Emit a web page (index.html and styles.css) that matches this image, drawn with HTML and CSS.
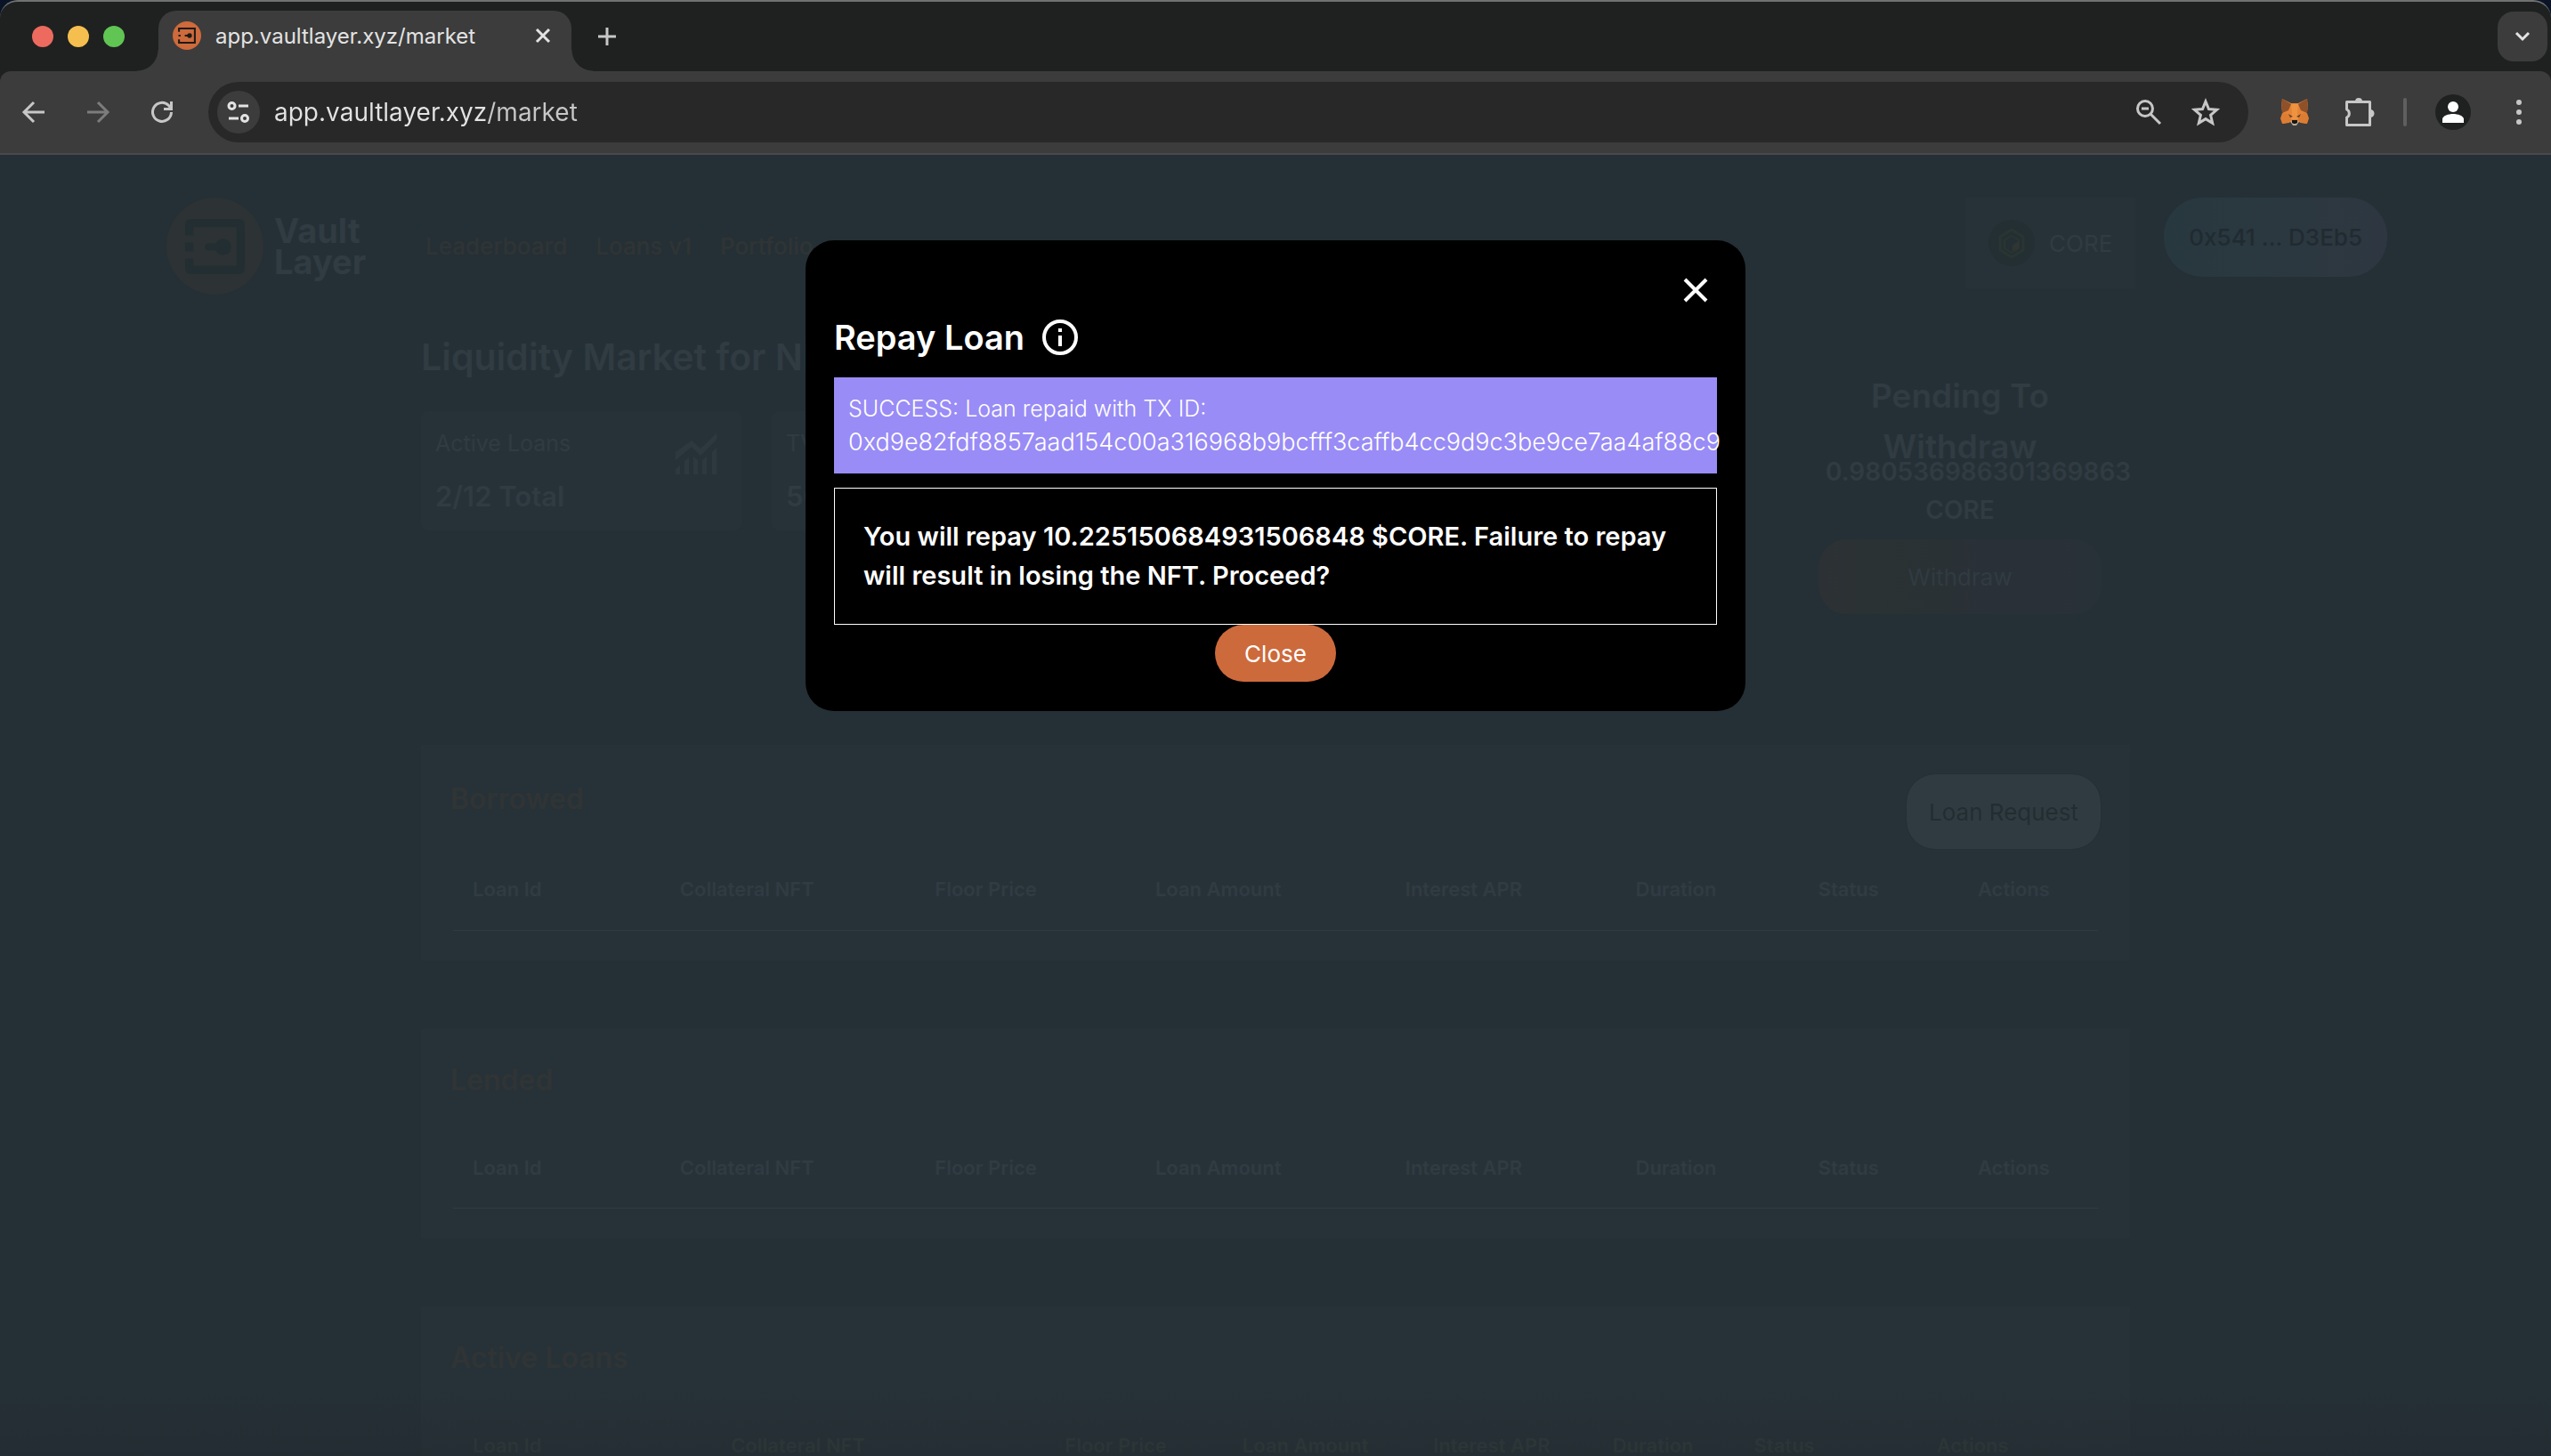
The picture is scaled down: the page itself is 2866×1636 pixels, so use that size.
FILE: index.html
```html
<!DOCTYPE html>
<html lang="en">
<head>
<meta charset="utf-8">
<title>app.vaultlayer.xyz/market</title>
<link rel="stylesheet" href="styles.css">
</head>
<body>
<div class="window">
  <div class="tabstrip">
    <div class="lights"><span class="light red"></span><span class="light yellow"></span><span class="light green"></span></div>
    <div class="tab">
      <svg class="favicon" viewBox="0 0 108 108" aria-hidden="true"><circle cx="54" cy="54" r="54" fill="#ce6a3b"/><path d="M24 40V27h60v54H24V68M22 54h8" fill="none" stroke="#1d1a17" stroke-width="7"/><circle cx="64" cy="54" r="9" fill="#1d1a17"/><path d="M46 54h16" stroke="#1d1a17" stroke-width="7"/></svg>
      <span class="tab-title">app.vaultlayer.xyz/market</span>
      <button class="icon-btn" aria-label="Close tab"><svg width="20" height="20" viewBox="0 0 20 20"><path d="M3 3l14 14M17 3L3 17" stroke="#e3e3e3" stroke-width="3"/></svg></button>
    </div>
    <button class="icon-btn new-tab" aria-label="New tab"><svg width="24" height="24" viewBox="0 0 24 24"><path d="M12 2v20M2 12h20" stroke="#c7c7c7" stroke-width="3"/></svg></button>
    <button class="tab-search" aria-label="Search tabs"><svg width="20" height="14" viewBox="0 0 20 14"><path d="M3 3l7 7 7-7" fill="none" stroke="#e3e3e3" stroke-width="3"/></svg></button>
  </div>
  <div class="toolbar">
    <div class="nav-buttons">
      <button class="icon-btn" aria-label="Back"><svg width="28" height="28" viewBox="0 0 28 28"><path d="M26 14H4M14 3L3 14l11 11" fill="none" stroke="#c7c7c7" stroke-width="3"/></svg></button>
      <button class="icon-btn" aria-label="Forward"><svg width="28" height="28" viewBox="0 0 28 28"><path d="M2 14h22M14 3l11 11-11 11" fill="none" stroke="#7c7c7c" stroke-width="3"/></svg></button>
      <button class="icon-btn" aria-label="Reload"><svg width="28" height="28" viewBox="0 0 28 28"><path d="M24.500 14a10.500 10.500 0 1 1-3-7.500L24 9.500M24.500 2v8.500H16" fill="none" stroke="#c7c7c7" stroke-width="3"/></svg></button>
    </div>
    <div class="omnibox">
      <button class="site-info" aria-label="Site information"><svg width="28" height="28" viewBox="0 0 28 28" fill="none" stroke="#e3e3e3" stroke-width="3"><circle cx="6.500" cy="7" r="3.500"/><path d="M14 7h11M3 21h11"/><circle cx="21" cy="21" r="3.500"/></svg></button>
      <input class="url" type="text" aria-label="Address" value="app.vaultlayer.xyz/market">
      <button class="icon-btn" aria-label="Zoom"><svg width="32" height="32" viewBox="0 0 32 32" fill="none" stroke="#c7c7c7" stroke-width="3"><circle cx="12" cy="12" r="8.500"/><path d="M18 18l11 11M8 12h8"/></svg></button>
      <button class="icon-btn" aria-label="Bookmark"><svg width="32" height="32" viewBox="0 0 32 32"><path d="M16 4l3.500 8.500 9 .8-6.900 6 2.100 9L16 23.600l-7.700 4.700 2.100-9-6.900-6 9-.8z" fill="none" stroke="#c7c7c7" stroke-width="3"/></svg></button>
    </div>
    <div class="extensions">
      <button class="icon-btn" aria-label="MetaMask"><svg width="32" height="32" viewBox="0 0 32 32"><path d="M2 1l10 5h8l10-5 1 10-2 6 2 6-2 6-8-2-3 3h-4l-3-3-8 2-2-6 2-6-2-6z" fill="#e58436"/><path d="M2 1l10 6-3 7-7 3-1-6zM30 1L20 7l3 7 7 3 1-6z" fill="#8f5129"/><path d="M12 7h8l-1 9 1 8h-8l1-8z" fill="#ef9340"/><path d="M2 17l7 1 3 6-2 4-8 1-2-6zM30 17l-7 1-3 6 2 4 8 1 2-6z" fill="#dd7d33"/><path d="M9 18l5 3-3 1zM23 18l-5 3 3 1z" fill="#5a3f2c"/><path d="M11 26h10l-3 5h-4z" fill="#b5aa9c"/><path d="M13 25h6v3l-2 1h-2l-2-1z" fill="#161616"/></svg></button>
      <button class="icon-btn" aria-label="Extensions"><svg width="34" height="34" viewBox="0 0 34 34"><path d="M2.500 5.500h26v26h-26v-8.500a5 5 0 0 0 0-9z" fill="none" stroke="#c7c7c7" stroke-width="3" stroke-linejoin="round"/><path d="M12 5a4 4 0 0 1 8 0zM29 14a4 4 0 0 1 0 9z" fill="#c7c7c7"/></svg></button>
      <span class="divider"></span>
      <button class="icon-btn" aria-label="Profile"><svg width="40" height="40" viewBox="0 0 40 40"><circle cx="20" cy="20" r="20" fill="#1f2120"/><circle cx="20" cy="14" r="6" fill="#fff"/><path d="M8 32v-4c0-4 7-6 12-6s12 2 12 6v4z" fill="#fff"/></svg></button>
      <button class="icon-btn" aria-label="Menu"><svg width="8" height="30" viewBox="0 0 8 30" fill="#c7c7c7"><circle cx="4" cy="4" r="3"/><circle cx="4" cy="15" r="3"/><circle cx="4" cy="26" r="3"/></svg></button>
    </div>
  </div>

  <div class="app">
    <header class="site-header">
      <a class="brand" href="#">
        <svg width="109" height="109" viewBox="0 0 108 108" aria-hidden="true"><circle cx="54" cy="54" r="54" fill="#2d3234"/><path d="M21 42V30q0-6 6-6h54q6 0 6 6v49q0 6-6 6H27q-6 0-6-6V68h9v8h48V33H30v9zM21 50h9v10h-9z" fill="#222e32"/><circle cx="63" cy="55" r="9" fill="#222e32"/><rect x="43" y="51" width="18" height="8" rx="4" fill="#222e32"/></svg>
        <span>Vault<br>Layer</span>
      </a>
      <nav class="site-nav"><a href="#">Leaderboard</a><a href="#">Loans v1</a><a href="#">Portfolio</a></nav>
      <div class="wallet">
        <button class="chain"><svg width="52" height="52" viewBox="0 0 52 52" aria-hidden="true"><circle cx="26" cy="26" r="26" fill="#232f33"/><path d="M26 11l13 8v15l-13 8-13-8V19z" fill="none" stroke="#2a3532" stroke-width="3"/><path d="M26 18l8 5v9l-8 5-8-5v-9z" fill="none" stroke="#2a3532" stroke-width="2"/><path d="M27 28l7-4v8l-7 3z" fill="#303532"/></svg>CORE</button>
        <button class="address">0x541 ... D3Eb5</button>
      </div>
    </header>

    <main class="market">
      <div class="overview">
        <section>
          <h1>Liquidity Market for NFT</h1>
          <div class="stats">
            <div class="stat"><div><p class="stat-label">Active Loans</p><p class="stat-value">2/12 Total</p></div>
              <svg width="46" height="46" viewBox="0 0 46 46" aria-hidden="true"><path d="M0 21L18 8l10 9L46 0v7L28 25 18 15 0 30zM0 40l5-4v10H0zM10 31l5-4v19h-5zM20 26l5 4v16h-5zM30 30l5-4v20h-5zM41 21l5-5v30h-5z" fill="#2e393f"/></svg></div>
            <div class="stat"><div><p class="stat-label">TVL</p><p class="stat-value">50</p></div></div>
          </div>
        </section>
        <aside class="pending">
          <h2>Pending To Withdraw</h2>
          <p class="amount">0.980536986301369863 CORE</p>
          <button class="withdraw">Withdraw</button>
        </aside>
      </div>

      <section class="panel">
        <div class="panel-head"><h2>Borrowed</h2><button class="request">Loan Request</button></div>
        <table class="loans">
          <thead><tr><th>Loan Id</th><th>Collateral NFT</th><th>Floor Price</th><th>Loan Amount</th><th>Interest APR</th><th>Duration</th><th>Status</th><th>Actions</th></tr></thead>
        </table>
      </section>
      <section class="panel">
        <div class="panel-head"><h2>Lended</h2></div>
        <table class="loans">
          <thead><tr><th>Loan Id</th><th>Collateral NFT</th><th>Floor Price</th><th>Loan Amount</th><th>Interest APR</th><th>Duration</th><th>Status</th><th>Actions</th></tr></thead>
        </table>
      </section>
      <section class="panel">
        <div class="panel-head"><h2>Active Loans</h2></div>
        <table class="loans active">
          <thead><tr><th>Loan Id</th><th>Collateral NFT</th><th>Floor Price</th><th>Loan Amount</th><th>Interest APR</th><th>Duration</th><th>Status</th><th>Actions</th></tr></thead>
        </table>
      </section>
    </main>

    <div class="overlay">
      <div class="modal" role="dialog" aria-modal="true" aria-labelledby="modal-title">
        <button class="dismiss" aria-label="Dismiss"><svg width="28" height="28" viewBox="0 0 28 28"><path d="M2 2l24 24M26 2L2 26" stroke="#fff" stroke-width="4"/></svg></button>
        <div class="modal-head">
          <h2 id="modal-title">Repay Loan</h2>
          <svg width="40" height="40" viewBox="0 0 40 40" aria-hidden="true"><circle cx="20" cy="20" r="18" fill="none" stroke="#fff" stroke-width="4"/><path d="M18 10h4v4h-4zM18 18h4v12h-4z" fill="#fff"/></svg>
        </div>
        <div class="alert" role="status"><p>SUCCESS: Loan repaid with TX ID:</p><p class="hash">0xd9e82fdf8857aad154c00a316968b9bcfff3caffb4cc9d9c3be9ce7aa4af88c9</p></div>
        <p class="confirm">You will repay 10.225150684931506848 $CORE. Failure to repay will result in losing the NFT. Proceed?</p>
        <button class="close">Close</button>
      </div>
    </div>
  </div>
</div>
</body>
</html>
```
FILE: styles.css
```css
:root {
  --page: #253036;
  --panel: #273238;
  --faint: #303b42;
  --rust: #303435;
  --bar: #3c3c3c;
  --strip: #1f2120;
}

* { box-sizing: border-box; }
body, h1, h2, p { margin: 0; }
body { background: #0a1426; font-family: Inter, "Open Sans", sans-serif; }
button { border: 0; background: none; padding: 0; font: inherit; color: inherit; }
a { color: inherit; text-decoration: none; }
svg { display: block; flex: none; }

.window {
  height: 100vh;
  display: flex;
  flex-direction: column;
  overflow: hidden;
  background: var(--strip);
  border-top: 2px solid #6f7271;
  border-radius: 20px 20px 0 0;
}

/* Browser chrome */
.tabstrip { height: 78px; flex: none; display: flex; align-items: flex-end; padding: 0 4px 0 36px; }
.lights { display: flex; gap: 16px; align-self: center; margin-right: 38px; }
.light { width: 24px; height: 24px; border-radius: 50%; }
.red { background: #ed6a5f; }
.yellow { background: #f5bf4f; }
.green { background: #61c554; }
.tab {
  position: relative;
  width: 464px;
  height: 68px;
  padding: 0 22px 12px 16px;
  display: flex;
  align-items: center;
  gap: 16px;
  background: var(--bar);
  border-radius: 20px 20px 0 0;
}
.tab::before, .tab::after { content: ""; position: absolute; bottom: 0; width: 24px; height: 24px; }
.tab::before { right: 100%; background: radial-gradient(circle at 0 0, transparent 23px, var(--bar) 24px); }
.tab::after { left: 100%; background: radial-gradient(circle at 100% 0, transparent 23px, var(--bar) 24px); }
.favicon { width: 32px; height: 32px; }
.tab-title { flex: 1; font-size: 24px; color: #e3e3e3; }
.icon-btn { display: grid; place-items: center; flex: none; }
.new-tab { align-self: center; margin-left: 28px; }
.tab-search {
  width: 56px; height: 56px; margin-left: auto; align-self: center;
  display: grid; place-items: center;
  background: var(--bar); border-radius: 18px;
}
.toolbar {
  height: 94px; flex: none; display: flex; align-items: center;
  padding: 0 32px 0 24px;
  background: var(--bar);
  border-bottom: 2px solid #484a4a;
  border-radius: 12px 12px 0 0;
}
.nav-buttons { display: flex; gap: 44px; margin-right: 38px; }
.omnibox {
  flex: 1; height: 68px; display: flex; align-items: center; gap: 32px;
  padding: 0 32px 0 10px; background: #282828; border-radius: 34px;
}
.site-info { width: 48px; height: 48px; margin-right: -16px; display: grid; place-items: center; flex: none; background: var(--bar); border-radius: 50%; }
.url {
  flex: 1; min-width: 0; padding: 0; border: 0; outline: 0;
  font: 28px Inter, sans-serif; color: transparent;
  background: linear-gradient(90deg, #e3e3e3 238px, #c7c7c7 238px) text;
}
.extensions { display: flex; align-items: center; gap: 32px; margin-left: 36px; }
.extensions .icon-btn:nth-child(2) { margin-left: 8px; }
.extensions .icon-btn:last-child { margin-left: 18px; }
.divider { width: 4px; height: 32px; border-radius: 2px; background: #5f5f5f; }

/* Application */
.app {
  position: relative; flex: 1; min-height: 0; overflow: hidden;
  background: var(--page); color: var(--faint); font-size: 26px;
}
.site-header { display: flex; align-items: center; padding: 48px 184px 0 187px; }
.brand { width: 291px; display: flex; align-items: center; gap: 12px; font-size: 38px; font-weight: 700; line-height: 35px; }
.site-nav { display: flex; gap: 32px; font-weight: 500; color: var(--rust); }
.wallet { margin-left: auto; align-self: flex-start; display: flex; gap: 32px; align-items: flex-start; }
.chain { display: flex; align-items: center; gap: 16px; height: 102px; padding: 0 26px; background: var(--panel); }
.address {
  height: 89px; padding: 0 28px; border-radius: 44px;
  font-weight: 500; color: #202b30;
  background: linear-gradient(90deg, #28383f, #2b3840 50%, #2e3741);
}

.market { max-width: 1920px; margin: 42px auto 0; }
.overview { display: flex; justify-content: space-between; padding-right: 32px; }
h1 { font-size: 41px; line-height: 56px; font-weight: 600; }
.stats { display: flex; gap: 34px; margin-top: 33px; }
.stat {
  width: 360px; height: 134px; padding: 16px 28px 0 16px;
  display: flex; justify-content: space-between; align-items: flex-start;
  background: var(--panel); border-radius: 8px;
}
.stat svg { margin-top: 9px; }
.stat-label { font-size: 25px; line-height: 40px; }
.stat-value { font-size: 31px; line-height: 44px; font-weight: 600; margin-top: 18px; }
.pending { width: 318px; padding-top: 43px; text-align: center; font-weight: 600; }
.pending h2 { font-size: 37px; line-height: 57px; font-weight: 600; padding: 0 40px; }
.amount { font-size: 28px; line-height: 43px; margin-top: -21px; padding: 0 8px; }
.withdraw {
  width: 100%; height: 84px; margin-top: 11px; border-radius: 32px; font-weight: 400;
  background: linear-gradient(90deg, #2d3135, #2a3233 20%, #2a3135 45%, #2a3038 60%, #2a3038 85%, #273138);
}

.panel { margin-top: 77px; padding: 33px; background: var(--panel); }
.overview + .panel { margin-top: 147px; }
.panel-head { display: flex; align-items: center; justify-content: space-between; }
.panel-head h2 { font-size: 32px; line-height: 50px; margin-bottom: 28px; font-weight: 600; color: var(--rust); }
.request { height: 84px; padding: 0 25px; border-radius: 32px; color: #222d32; background: #303b41; outline: 1px solid #243036; }
.loans { width: calc(100% - 6px); margin: 0 3px; border-collapse: collapse; table-layout: fixed; font-size: 22px; }
.loans th { height: 91px; padding: 0 0 0 22px; text-align: left; font-weight: 600; border-bottom: 1px solid #2f3a41; }
.loans th:nth-child(1) { width: 12.6%; }
.loans th:nth-child(2) { width: 15.5%; }
.loans th:nth-child(3) { width: 13.4%; }
.loans th:nth-child(4) { width: 15.2%; }
.loans th:nth-child(5) { width: 14%; }
.loans th:nth-child(6) { width: 11.1%; }
.loans th:nth-child(7) { width: 9.7%; }
.active { color: #303b3c; }
.active th:nth-child(1) { width: 15.7%; }
.active th:nth-child(2) { width: 20.3%; }
.active th:nth-child(3) { width: 10.8%; }
.active th:nth-child(4) { width: 11.6%; }
.active th:nth-child(5) { width: 10.9%; }
.active th:nth-child(6) { width: 8.6%; }
.active th:nth-child(7) { width: 11.1%; }

/* Dialog */
.overlay {
  position: absolute; inset: 0; padding-top: 96px;
  display: flex; justify-content: center; align-items: flex-start;
  background: linear-gradient(to top, rgb(30 36 40 / 30%), transparent 80px);
}
.modal {
  width: 1056px; padding: 34px 32px 33px;
  display: flex; flex-direction: column;
  background: #000; color: #fff; border-radius: 32px;
}
.dismiss { align-self: flex-end; width: 48px; height: 44px; display: grid; place-items: center; }
.modal-head { display: flex; align-items: center; gap: 20px; margin: 6px 0 20px; }
.modal-head h2 { font-size: 38px; line-height: 50px; font-weight: 600; }
.alert { padding: 16px; margin-bottom: 16px; background: #998cf6; font-size: 25px; line-height: 38px; font-weight: 300; }
.hash { font-size: 27px; white-space: nowrap; }
.confirm { padding: 32px; border: 1px solid #fff; font-size: 29px; line-height: 44px; font-weight: 600; }
.close { align-self: center; width: 136px; height: 64px; border-radius: 32px; background: #cd6a3c; }
```
